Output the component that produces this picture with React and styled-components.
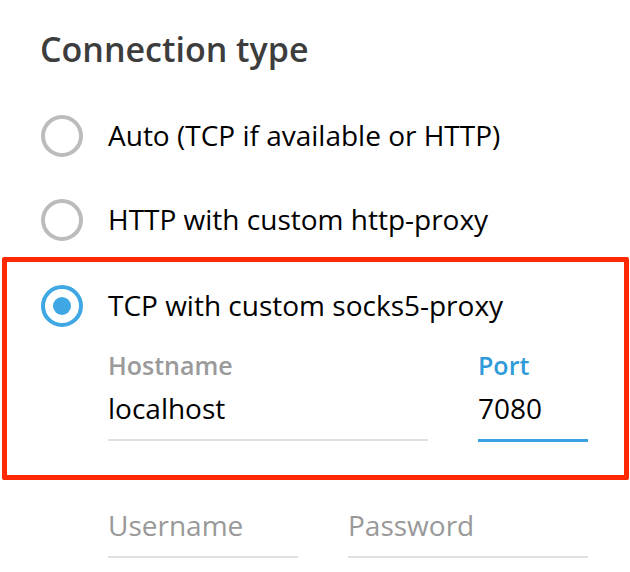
import React from "react";
import styled, { createGlobalStyle } from "styled-components";

const Global = createGlobalStyle`
  html, body { margin: 0; padding: 0; background: #ffffff; }
  body { font-family: "Open Sans", "DejaVu Sans", sans-serif; -webkit-font-smoothing: antialiased; }
  * { box-sizing: border-box; }
`;

const Page = styled.div`
  width: 630px;
  height: 572px;
  overflow: hidden;
  padding-top: 29px;
`;

const Heading = styled.h1`
  margin: 0 0 46px 40px;
  font-size: 34px;
  line-height: 40px;
  font-weight: 600;
  color: #3d3d3d;
`;

const Section = styled.div`
  padding-left: ${(p) => p.$pad}px;
`;

const Row = styled.label`
  display: flex;
  align-items: center;
  gap: 25px;
  height: 42px;
  margin-bottom: ${(p) => p.$mb || 0}px;
  cursor: pointer;
`;

const Circle = styled.span`
  flex: none;
  width: 42px;
  height: 42px;
  border-radius: 50%;
  border: 4px solid ${(p) => (p.$on ? "#3ea7e4" : "#bcbcbc")};
  display: flex;
  align-items: center;
  justify-content: center;
`;

const Dot = styled.span`
  width: 18px;
  height: 18px;
  border-radius: 50%;
  background: #3ea7e4;
`;

const RowText = styled.span`
  font-size: 28px;
  line-height: 40px;
  color: #000;
  margin-top: -2px;
`;

const Highlight = styled.div`
  margin: 16px 1px 0 2px;
  border: 5px solid #ff2800;
  border-radius: 2px;
  padding: 23px 0 33px 34px;
`;

const Fields = styled.div`
  display: flex;
  gap: 50px;
  margin-left: 67px;
  margin-top: ${(p) => p.$mt || 0}px;
`;

const Field = styled.div`
  width: ${(p) => p.$w}px;
  display: flex;
  flex-direction: column;
`;

const Label = styled.div`
  font-size: 25px;
  line-height: 34px;
  font-weight: 600;
  color: ${(p) => (p.$active ? "#2f9bd9" : "#9a9a9a")};
  margin-bottom: 6px;
`;

const Value = styled.div`
  font-size: 28px;
  line-height: 40px;
  color: ${(p) => (p.$placeholder ? "#999999" : "#000")};
  padding-bottom: 11px;
  border-bottom: ${(p) => (p.$active ? "3px solid #3aa2e2" : "2px solid #e0e0e0")};
  white-space: nowrap;
`;

const Radio = ({ on, children, mb }) => (
  <Row $mb={mb}>
    <Circle $on={on}>{on && <Dot />}</Circle>
    <RowText>{children}</RowText>
  </Row>
);

export default function App() {
  return (
    <>
      <Global />
      <Page>
        <Heading>Connection type</Heading>
        <Section $pad={41}>
          <Radio mb={42}>Auto (TCP if available or HTTP)</Radio>
          <Radio>HTTP with custom http-proxy</Radio>
        </Section>
        <Highlight>
          <Radio on>TCP with custom socks5-proxy</Radio>
          <Fields $mt={21}>
            <Field $w={320}>
              <Label>Hostname</Label>
              <Value>localhost</Value>
            </Field>
            <Field $w={110}>
              <Label $active>Port</Label>
              <Value $active>7080</Value>
            </Field>
          </Fields>
        </Highlight>
        <Section $pad={41}>
          <Fields $mt={25}>
            <Field $w={190}>
              <Value $placeholder>Username</Value>
            </Field>
            <Field $w={240}>
              <Value $placeholder>Password</Value>
            </Field>
          </Fields>
        </Section>
      </Page>
    </>
  );
}
